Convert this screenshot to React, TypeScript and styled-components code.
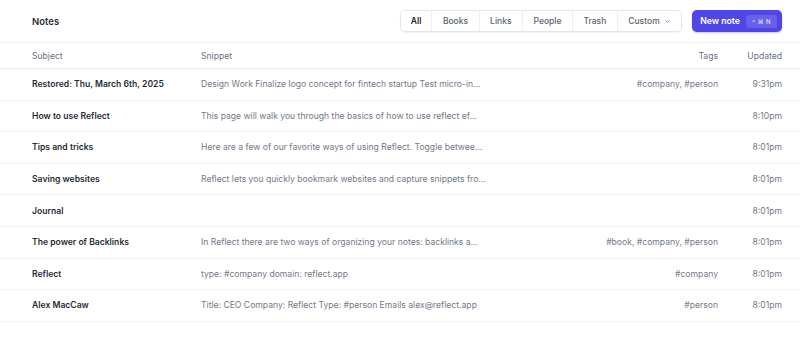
import styled, { createGlobalStyle } from 'styled-components';

interface Note {
  subject: string;
  snippet: string;
  tags: string;
  updated: string;
}

const notes: Note[] = [
  {
    subject: 'Restored: Thu, March 6th, 2025',
    snippet: 'Design Work Finalize logo concept for fintech startup Test micro-in...',
    tags: '#company, #person',
    updated: '9:31pm',
  },
  {
    subject: 'How to use Reflect',
    snippet: 'This page will walk you through the basics of how to use reflect ef...',
    tags: '',
    updated: '8:10pm',
  },
  {
    subject: 'Tips and tricks',
    snippet: 'Here are a few of our favorite ways of using Reflect. Toggle betwee...',
    tags: '',
    updated: '8:01pm',
  },
  {
    subject: 'Saving websites',
    snippet: 'Reflect lets you quickly bookmark websites and capture snippets fro...',
    tags: '',
    updated: '8:01pm',
  },
  { subject: 'Journal', snippet: '', tags: '', updated: '8:01pm' },
  {
    subject: 'The power of Backlinks',
    snippet: 'In Reflect there are two ways of organizing your notes: backlinks a...',
    tags: '#book, #company, #person',
    updated: '8:01pm',
  },
  {
    subject: 'Reflect',
    snippet: 'type: #company domain: reflect.app',
    tags: '#company',
    updated: '8:01pm',
  },
  {
    subject: 'Alex MacCaw',
    snippet: 'Title: CEO Company: Reflect Type: #person Emails alex@reflect.app',
    tags: '#person',
    updated: '8:01pm',
  },
];

const filters = ['All', 'Books', 'Links', 'People', 'Trash'];

const GlobalStyle = createGlobalStyle`
  body {
    margin: 0;
    background: #ffffff;
    font-family: Inter, "Noto Sans", sans-serif;
    -webkit-font-smoothing: antialiased;
  }
`;

const Page = styled.div`
  width: 800px;
  height: 354px;
  overflow: hidden;
  background: #fff;
`;

const Header = styled.div`
  display: flex;
  align-items: center;
  height: 43px;
  padding: 0 18px 0 32px;
  border-bottom: 1px solid #f1f2f4;
  box-sizing: border-box;
`;

const Title = styled.h1`
  flex: 1;
  margin: 0;
  font-size: 9.5px;
  font-weight: 600;
  color: #2a2f3a;
`;

const FilterGroup = styled.div`
  display: flex;
  height: 22px;
  border: 1px solid #e3e5e9;
  border-radius: 5px;
  box-shadow: 0 1px 2px rgba(16, 24, 40, 0.06);
  box-sizing: border-box;
  margin-right: 10px;
  overflow: hidden;
`;

const FilterButton = styled.button<{ $active?: boolean }>`
  display: flex;
  align-items: center;
  gap: 4px;
  padding: 0 ${(p) => (p.$active ? '10px' : '10.5px')};
  border: none;
  border-left: 1px solid #eceef1;
  background: #fff;
  font-family: inherit;
  font-size: 8.5px;
  font-weight: ${(p) => (p.$active ? 600 : 500)};
  color: ${(p) => (p.$active ? '#1f2430' : '#5d6371')};
  cursor: pointer;

  &:first-child {
    border-left: none;
  }
`;

const NewNote = styled.button`
  display: flex;
  align-items: center;
  gap: 6px;
  height: 22px;
  padding: 0 5px 0 8px;
  border: none;
  border-radius: 5px;
  background: #5046e6;
  box-shadow: 0 1px 2px rgba(60, 50, 200, 0.3);
  color: #fff;
  font-family: inherit;
  font-size: 8.7px;
  font-weight: 600;
  cursor: pointer;
`;

const Kbd = styled.span`
  display: flex;
  align-items: center;
  justify-content: center;
  width: 31px;
  height: 13px;
  border-radius: 3px;
  background: rgba(255, 255, 255, 0.14);
  font-size: 6px;
  font-weight: 600;
  word-spacing: 1px;
  color: #d9d8fb;
`;

const Grid = styled.div`
  display: grid;
  grid-template-columns: 169px 1fr 170px 64px;
  align-items: center;
  padding: 0 18px 0 32px;
  border-bottom: 1px solid #f1f2f4;
`;

const HeadRow = styled(Grid)`
  height: 25px;
  border-bottom-color: #eceef1;
  box-shadow: 0 1px 1px rgba(0, 0, 0, 0.015);
  font-size: 8.6px;
  color: #6a7080;
`;

const Row = styled(Grid)`
  height: 31.6px;
  box-sizing: border-box;
  font-size: 8.6px;
`;

const Cell = styled.div<{ $align?: 'right' }>`
  white-space: nowrap;
  overflow: hidden;
  text-align: ${(p) => p.$align || 'left'};
`;

const Subject = styled(Cell)`
  font-weight: 600;
  color: #262b36;
`;

const Muted = styled(Cell)`
  color: #737988;
`;

function Chevron() {
  return (
    <svg width="7" height="7" viewBox="0 0 24 24" fill="none" stroke="#5d6371" strokeWidth="2.5" strokeLinecap="round" strokeLinejoin="round">
      <path d="m6 9 6 6 6-6" />
    </svg>
  );
}

export default function App() {
  return (
    <Page>
      <GlobalStyle />
      <Header>
        <Title>Notes</Title>
        <FilterGroup>
          {filters.map((f) => (
            <FilterButton key={f} $active={f === 'All'}>
              {f}
            </FilterButton>
          ))}
          <FilterButton>
            Custom <Chevron />
          </FilterButton>
        </FilterGroup>
        <NewNote>
          New note
          <Kbd>^ ⌘ N</Kbd>
        </NewNote>
      </Header>
      <HeadRow>
        <Cell>Subject</Cell>
        <Cell>Snippet</Cell>
        <Cell $align="right">Tags</Cell>
        <Cell $align="right">Updated</Cell>
      </HeadRow>
      {notes.map((n) => (
        <Row key={n.subject}>
          <Subject>{n.subject}</Subject>
          <Muted>{n.snippet}</Muted>
          <Muted $align="right">{n.tags}</Muted>
          <Muted $align="right">{n.updated}</Muted>
        </Row>
      ))}
    </Page>
  );
}
